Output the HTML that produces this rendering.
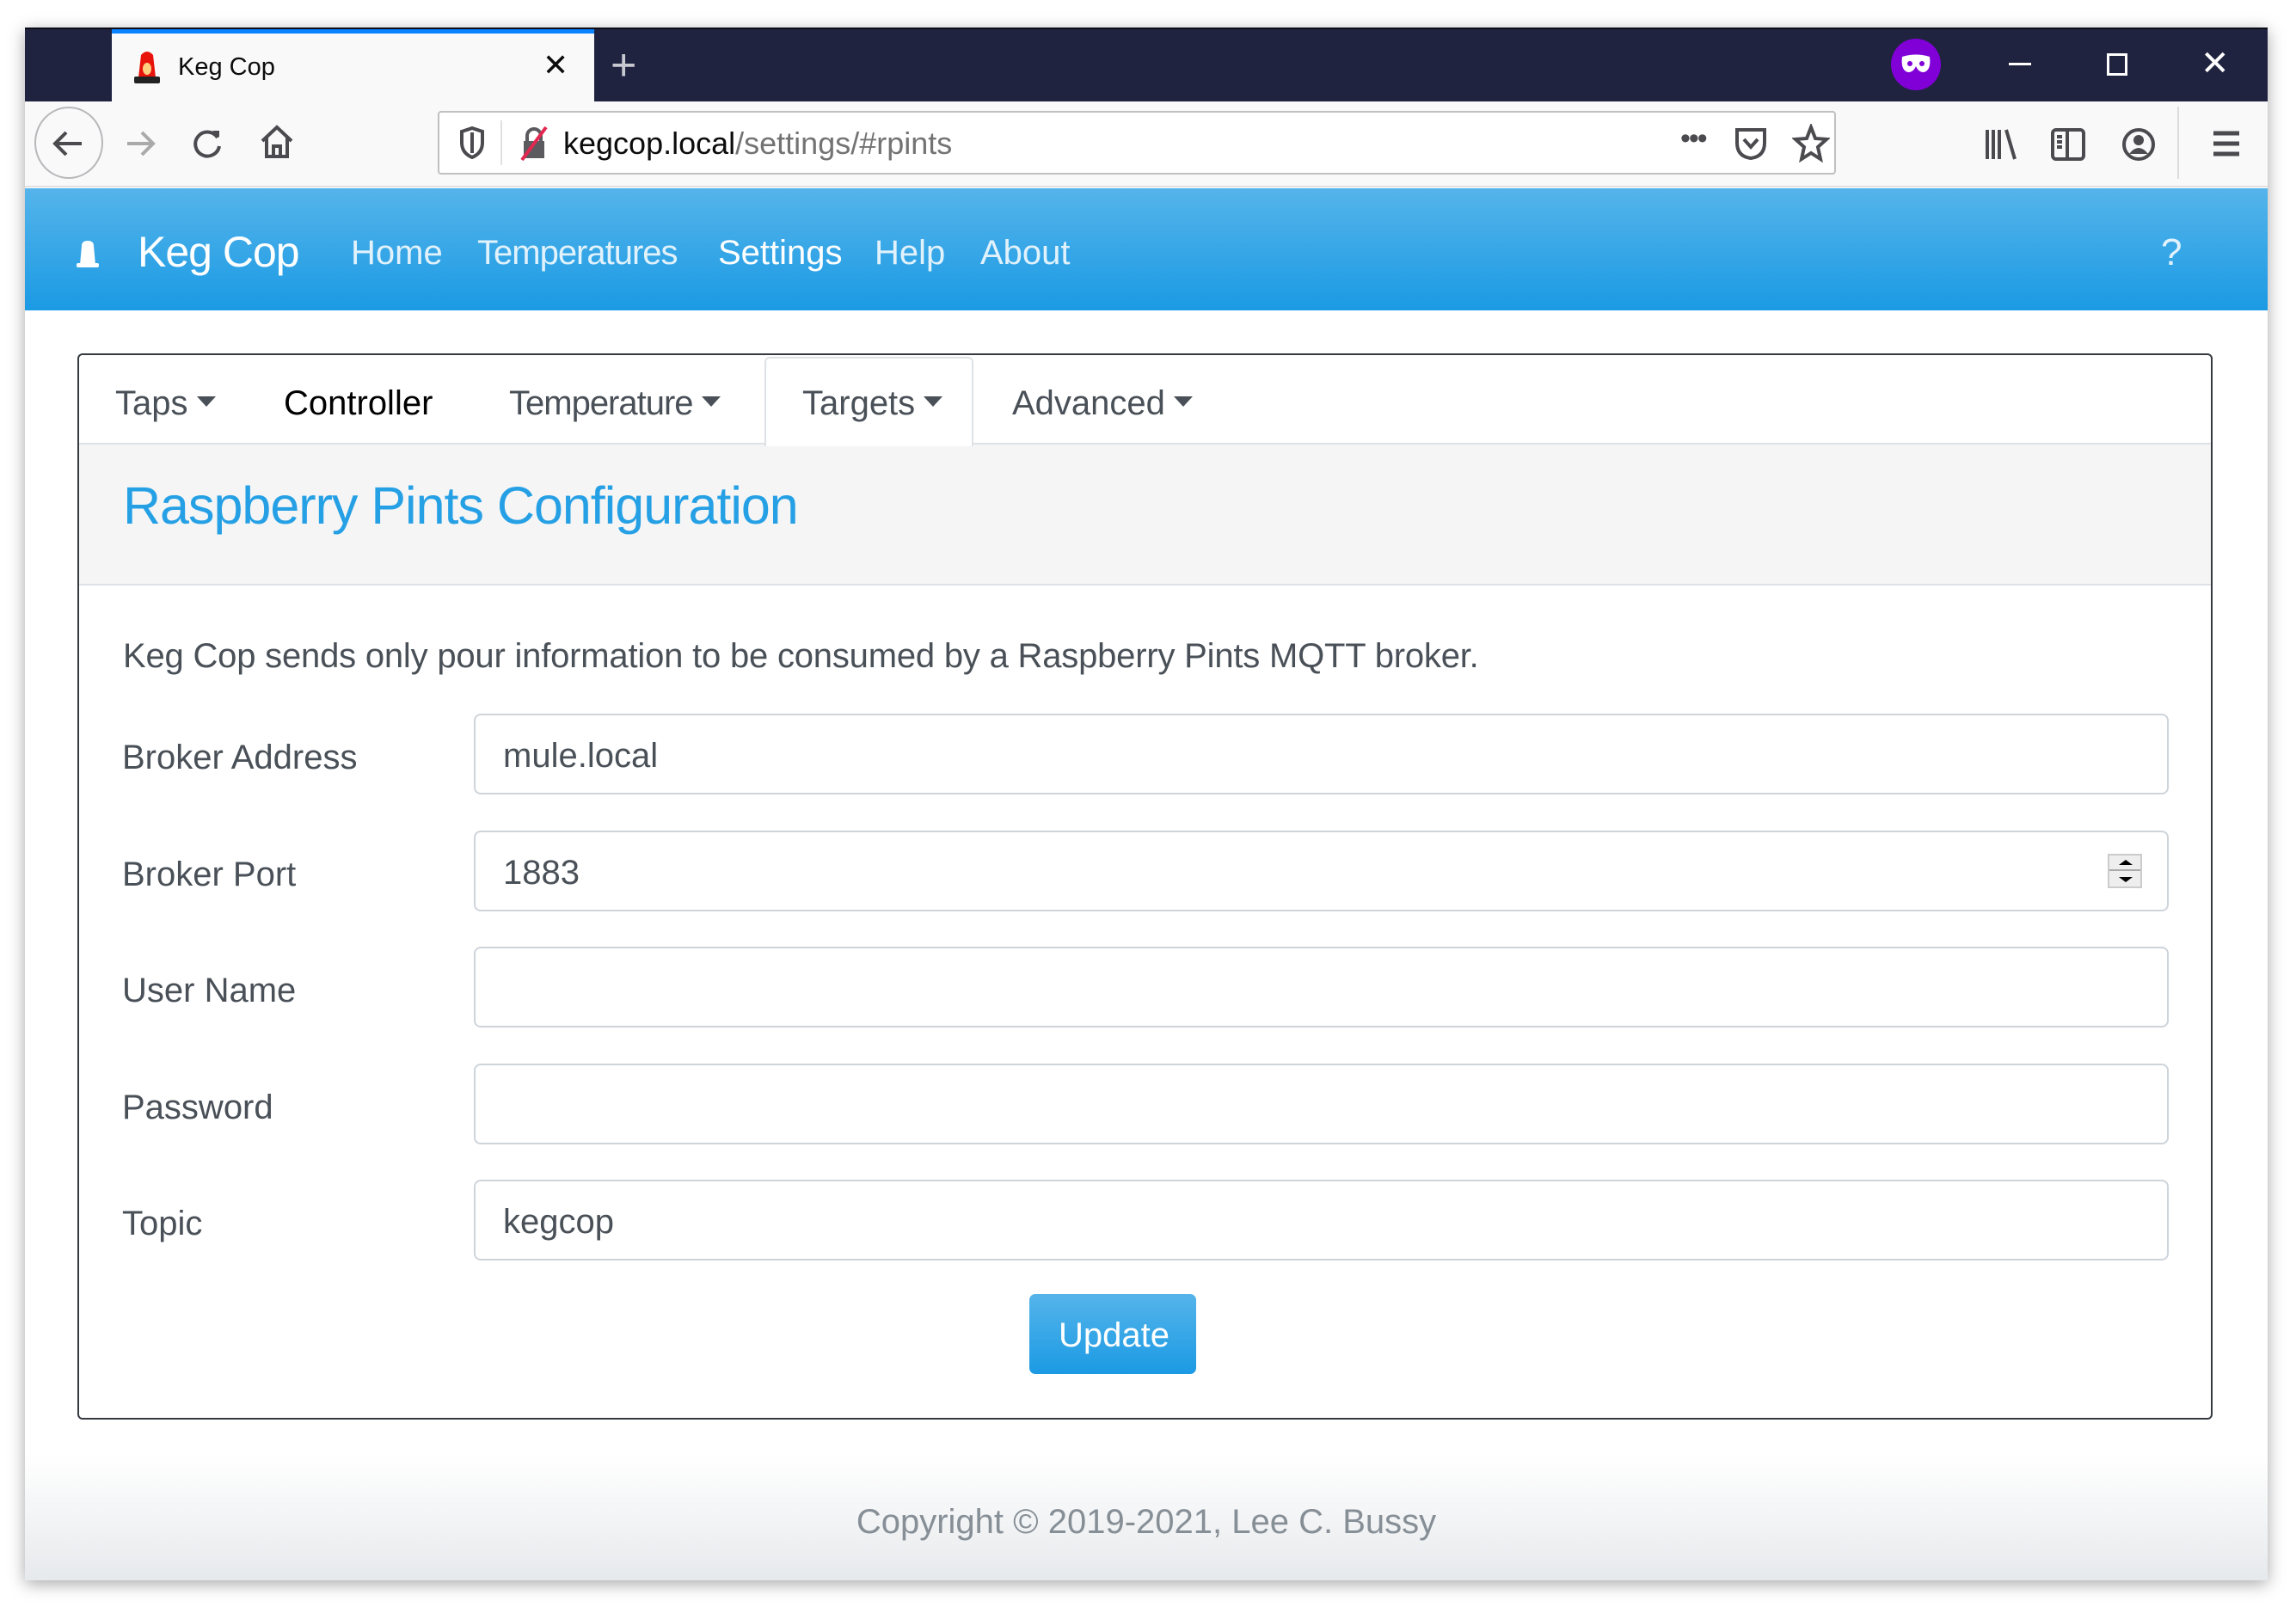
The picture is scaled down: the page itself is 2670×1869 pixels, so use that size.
<!DOCTYPE html>
<html><head><meta charset="utf-8"><style>
*{box-sizing:border-box;margin:0;padding:0}
body{width:2670px;height:1869px;background:#fff;position:relative;overflow:hidden;font-family:"Liberation Sans",sans-serif}
.a{position:absolute}
.win{left:29px;top:32px;width:2608px;height:1806px;box-shadow:0 4px 18px rgba(0,0,0,.35);background:#fff;overflow:hidden}
.t{white-space:nowrap;line-height:1}
.ico{stroke:#4a4a4f;fill:none;stroke-width:4}
.nav{color:rgba(255,255,255,.85);font-size:40px}
.tab{font-size:40px;color:#495057}
.lbl{font-size:40px;color:#495057}
.inp{width:1971px;height:94px;border:2px solid #ced4da;border-radius:8px;background:#fff}
.val{font-size:40px;color:#495057;left:32px;top:27px}
.caret{display:inline-block;width:0;height:0;border-left:11px solid transparent;border-right:11px solid transparent;border-top:12px solid #495057;vertical-align:middle;margin-left:10px;position:relative;top:-4px}
</style></head><body>
<div class="a win">
 <!-- title bar -->
 <div class="a" style="left:0;top:0;width:2612px;height:86px;background:#1f2340;border-top:2px solid #0c0c16"></div>
 <div class="a" style="left:101px;top:2px;width:561px;height:84px;background:#f9f9fa;border-top:5px solid #0a84ff"></div>
 <svg class="a" style="left:122px;top:24px" width="40" height="42" viewBox="0 0 40 42"><path d="M10 34 L13 8 Q20 0 27 8 L30 34Z" fill="#e8140c"/><ellipse cx="20" cy="24" rx="5" ry="7" fill="#ffd080"/><rect x="5" y="33" width="30" height="8" rx="2" fill="#222"/></svg>
 <div class="a t" style="left:178px;top:32px;font-size:29px;color:#0c0c0d">Keg Cop</div>
 <div class="a t" style="left:602px;top:26px;font-size:36px;color:#0c0c0d">✕</div>
 <div class="a t" style="left:681px;top:18px;font-size:52px;color:#c8c8d0">+</div>
 <div class="a" style="left:2170px;top:13px;width:58px;height:60px;border-radius:50%;background:#8000d7"></div>
 <svg class="a" style="left:2180px;top:30px" width="38" height="26" viewBox="0 0 38 26"><path d="M3 4 Q19 -1 35 4 Q37 20 28 22 Q22 22 19 15 Q16 22 10 22 Q1 20 3 4Z" fill="#fff"/><circle cx="12" cy="12" r="3" fill="#8000d7"/><circle cx="26" cy="12" r="3" fill="#8000d7"/></svg>
 <div class="a" style="left:2307px;top:41px;width:26px;height:3px;background:#fff"></div>
 <div class="a" style="left:2421px;top:30px;width:24px;height:26px;border:3px solid #fff"></div>
 <div class="a t" style="left:2530px;top:22px;font-size:40px;color:#fff">✕</div>
 <!-- toolbar -->
 <div class="a" style="left:0;top:86px;width:2612px;height:100px;background:#f9f9fa;border-bottom:2px solid #e0e0e2"></div>
 <div class="a" style="left:11px;top:92px;width:80px;height:84px;border-radius:50%;border:2px solid #b8b8bb"></div>
 <svg class="a" style="left:26px;top:110px" width="50" height="50" viewBox="0 0 50 50"><path class="ico" d="M40 25H10M22 12L9 25L22 38"/></svg>
 <svg class="a" style="left:109px;top:110px" width="50" height="50" viewBox="0 0 50 50"><path d="M10 25H38M27 12L40 25L27 38" stroke="#aaa" stroke-width="4" fill="none"/></svg>
 <svg class="a" style="left:188px;top:110px" width="50" height="50" viewBox="0 0 50 50"><path class="ico" d="M36 18A14 14 0 1 0 38 28"/><path d="M30 10L38 10L38 18Z" fill="#4a4a4f"/></svg>
 <svg class="a" style="left:268px;top:108px" width="50" height="50" viewBox="0 0 50 50"><path class="ico" d="M8 24L25 8L42 24M13 20V42H37V20M21 42V30H29V42"/></svg>
 <div class="a" style="left:480px;top:97px;width:1626px;height:74px;background:#fff;border:2px solid #c0c0c2;border-radius:4px"></div>
 <svg class="a" style="left:500px;top:114px" width="40" height="40" viewBox="0 0 40 40"><path class="ico" d="M8 7L20 3L32 7V20Q32 32 20 37Q8 32 8 20Z"/><path d="M20 8V32" stroke="#4a4a4f" stroke-width="4"/></svg>
 <div class="a" style="left:553px;top:108px;width:2px;height:52px;background:#e0e0e2"></div>
 <svg class="a" style="left:572px;top:114px" width="40" height="42" viewBox="0 0 40 42"><rect x="8" y="18" width="24" height="20" fill="#5b5b5f"/><path d="M12 18V12A8 8 0 0 1 28 12V18" stroke="#5b5b5f" stroke-width="4" fill="none"/><path d="M6 40L34 2" stroke="#e22850" stroke-width="4"/></svg>
 <div class="a t" style="left:626px;top:117px;font-size:36px;color:#0c0c0d">kegcop.local<span style="color:#737373">/settings/#rpints</span></div>
 <div class="a t" style="left:1925px;top:112px;font-size:34px;color:#4a4a4f;letter-spacing:-2px">•••</div>
 <svg class="a" style="left:1985px;top:114px" width="44" height="42" viewBox="0 0 44 42"><path class="ico" d="M6 5H38V20Q38 36 22 38Q6 36 6 20Z"/><path class="ico" d="M14 16L22 25L30 16"/></svg>
 <svg class="a" style="left:2055px;top:112px" width="44" height="46" viewBox="0 0 44 46"><path class="ico" d="M22 4L27 17L40 18L30 27L33 41L22 34L11 41L14 27L4 18L17 17Z"/></svg>
 <svg class="a" style="left:2276px;top:115px" width="46" height="42" viewBox="0 0 46 42"><path class="ico" d="M6 4V38M13 4V38M20 4V38M28 4L38 38"/></svg>
 <svg class="a" style="left:2354px;top:115px" width="44" height="42" viewBox="0 0 44 42"><rect class="ico" x="4" y="4" width="36" height="34" rx="4"/><path class="ico" d="M21 4V38M9 12H15M9 18H15M9 24H15"/></svg>
 <svg class="a" style="left:2437px;top:115px" width="42" height="42" viewBox="0 0 42 42"><circle class="ico" cx="21" cy="21" r="17"/><circle cx="21" cy="16" r="6" fill="#4a4a4f"/><path d="M10 32Q21 18 32 32" fill="#4a4a4f"/></svg>
 <div class="a" style="left:2503px;top:92px;width:2px;height:84px;background:#dcdcde"></div>
 <svg class="a" style="left:2541px;top:117px" width="38" height="38" viewBox="0 0 38 38"><path d="M4 6H34M4 18H34M4 30H34" stroke="#4a4a4f" stroke-width="5"/></svg>
 <!-- navbar -->
 <div class="a" style="left:0;top:187px;width:2612px;height:142px;background:linear-gradient(#55b4ea,#1b9ae4)"></div>
 <svg class="a" style="left:57px;top:246px" width="32" height="34" viewBox="0 0 32 34"><path d="M7 30L9 8Q9 2 16 2Q23 2 23 8L25 30Z" fill="#fff"/><rect x="3" y="28" width="26" height="5" rx="2" fill="#fff"/></svg>
 <div class="a t" style="left:131px;top:236px;font-size:50px;color:#fff;letter-spacing:-1px">Keg Cop</div>
 <div class="a t nav" style="left:379px;top:242px">Home</div>
 <div class="a t nav" style="left:526px;top:242px;letter-spacing:-1px">Temperatures</div>
 <div class="a t nav" style="left:806px;top:242px;color:#fff">Settings</div>
 <div class="a t nav" style="left:988px;top:242px">Help</div>
 <div class="a t nav" style="left:1111px;top:242px">About</div>
 <div class="a t nav" style="left:2484px;top:240px;font-size:44px">?</div>
 <!-- card -->
 <div class="a" style="left:61px;top:379px;width:2483px;height:1240px;border:2px solid #343a40;border-radius:6px;background:#fff;overflow:hidden">
  <div class="a" style="left:0;top:102px;width:2491px;height:166px;background:#f5f5f5;border-top:2px solid #dee2e6;border-bottom:2px solid #dee2e6"></div>
  <div class="a" style="left:797px;top:2px;width:243px;height:104px;background:#fff;border:2px solid #dee2e6;border-bottom:none;border-radius:6px 6px 0 0"></div>
  <div class="a t tab" style="left:42px;top:36px">Taps<span class="caret"></span></div>
  <div class="a t tab" style="left:238px;top:36px;color:#000">Controller</div>
  <div class="a t tab" style="left:500px;top:36px;letter-spacing:-1px">Temperature<span class="caret"></span></div>
  <div class="a t tab" style="left:841px;top:36px">Targets<span class="caret"></span></div>
  <div class="a t tab" style="left:1085px;top:36px">Advanced<span class="caret"></span></div>
  <div class="a t" style="left:51px;top:145px;font-size:61px;color:#26a0e5;letter-spacing:-1px">Raspberry Pints Configuration</div>
  <div class="a t" style="left:51px;top:330px;font-size:40px;color:#495057;letter-spacing:-0.2px">Keg Cop sends only pour information to be consumed by a Raspberry Pints MQTT broker.</div>
 </div>
 <div class="a t lbl" style="left:113px;top:829px">Broker Address</div>
 <div class="a inp" style="left:522px;top:798px"><div class="a t val">mule.local</div></div>
 <div class="a t lbl" style="left:113px;top:965px">Broker Port</div>
 <div class="a inp" style="left:522px;top:934px"><div class="a t val">1883</div>
  <div class="a" style="left:1898px;top:25px;width:40px;height:40px;border:2px solid #ccc;background:#eee"><div style="height:18px;border-bottom:2px solid #aaa;position:relative"><div class="a" style="left:11px;top:5px;border-left:8px solid transparent;border-right:8px solid transparent;border-bottom:6px solid #000"></div></div><div class="a" style="left:11px;top:25px;border-left:8px solid transparent;border-right:8px solid transparent;border-top:6px solid #000"></div></div></div>
 <div class="a t lbl" style="left:113px;top:1100px">User Name</div>
 <div class="a inp" style="left:522px;top:1069px"></div>
 <div class="a t lbl" style="left:113px;top:1236px">Password</div>
 <div class="a inp" style="left:522px;top:1205px"></div>
 <div class="a t lbl" style="left:113px;top:1371px">Topic</div>
 <div class="a inp" style="left:522px;top:1340px"><div class="a t val">kegcop</div></div>
 <div class="a" style="left:1168px;top:1473px;width:194px;height:93px;border-radius:7px;background:linear-gradient(#55b4ea,#1b9ae4)"><div class="a t" style="left:34px;top:28px;font-size:40px;color:#fff">Update</div></div>
 <!-- footer -->
 <div class="a" style="left:0;top:1660px;width:2612px;height:148px;background:linear-gradient(#fff,#e6e9ec)"></div>
 <div class="a t" style="left:0;width:2608px;text-align:center;top:1718px;font-size:40px;color:#868e96">Copyright © 2019-2021, Lee C. Bussy</div>
</div>
</body></html>
